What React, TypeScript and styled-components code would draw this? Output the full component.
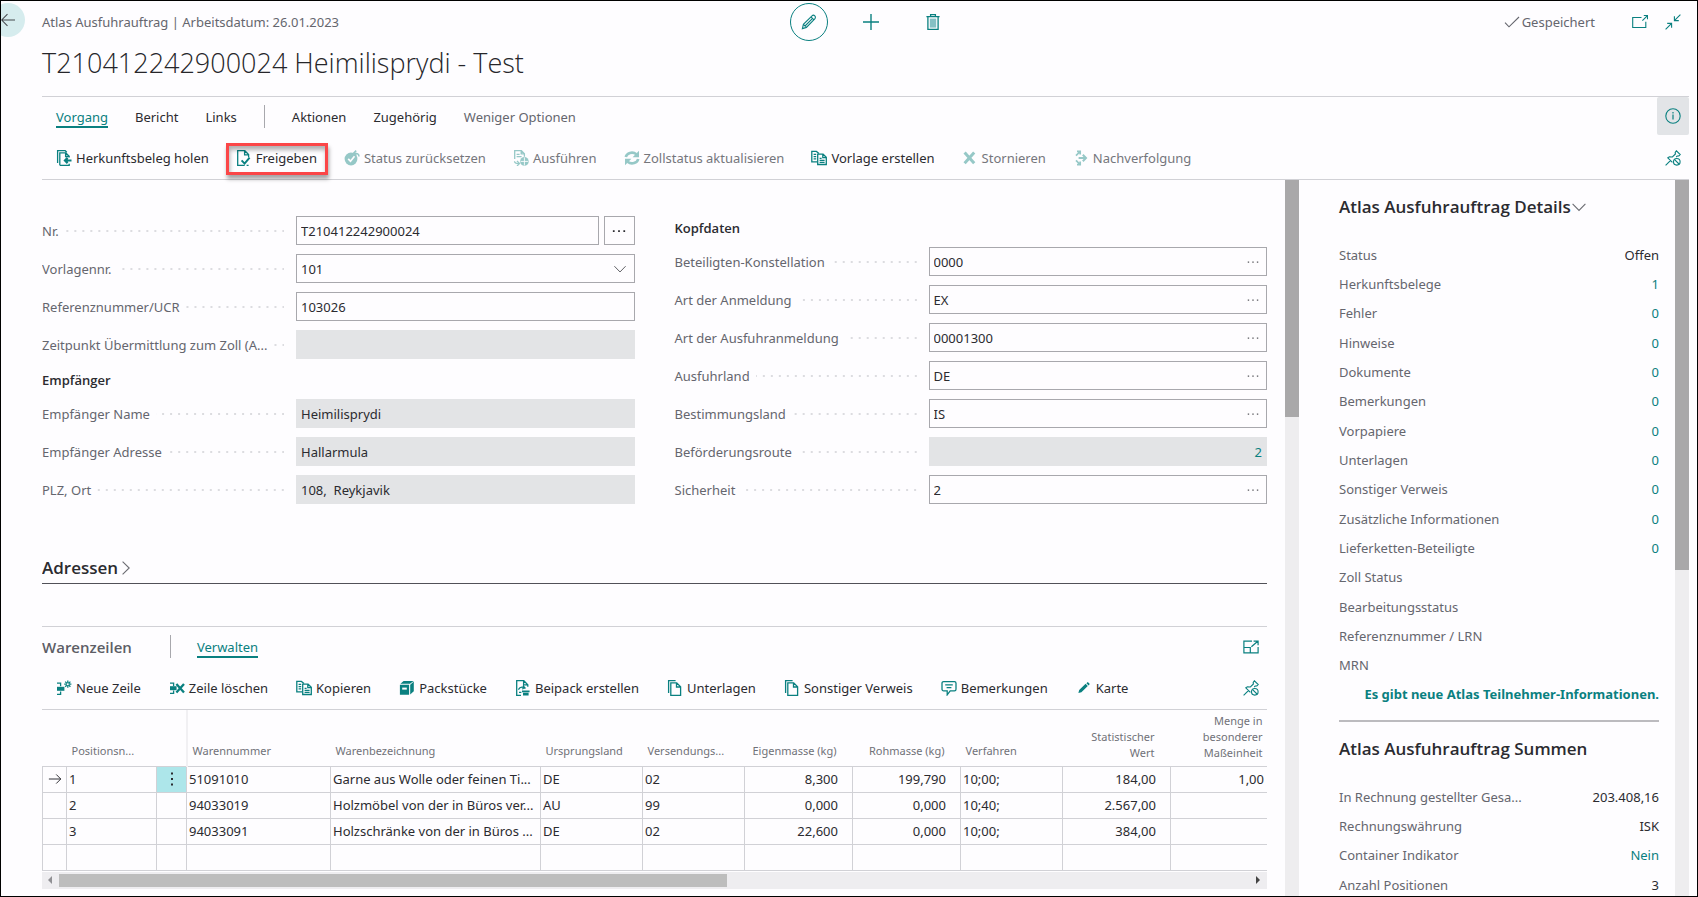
import React from 'react';
import styled, { createGlobalStyle, css } from 'styled-components';

const teal = '#0a8080';
const ink = '#2b2b30';
const muted = '#65666e';
const line = '#d1d1d6';
const edge = '#a8a8ad';

const GlobalStyle = createGlobalStyle`
  *, *::before, *::after { box-sizing: border-box; }
  body {
    margin: 0;
    background: #fefdff;
    color: ${ink};
    font: 400 13px/18px "Noto Sans", "Open Sans", sans-serif;
  }
  button, input, select { font: inherit; color: inherit; margin: 0; }
  a { color: inherit; text-decoration: none; }
  h1, h2, h3, dl, dd, ul { margin: 0; padding: 0; }
`;

/* ---------- icons ---------- */

const Svg = styled.svg`
  display: block;
  flex: none;
  fill: none;
  stroke: currentColor;
  stroke-width: 1.3;
`;

type IconName =
  | 'fetch' | 'release' | 'reset' | 'run' | 'refresh' | 'copy' | 'cancel' | 'track'
  | 'newLine' | 'deleteLine' | 'box' | 'pack' | 'pages' | 'comment' | 'card'
  | 'pencil' | 'plus' | 'trash' | 'popout' | 'collapse' | 'info' | 'unpin' | 'expand'
  | 'check' | 'back' | 'chevronDown' | 'chevronRight' | 'dots' | 'dotsBold' | 'arrowRight' | 'menu';

const shapes: Record<IconName, React.ReactNode> = {
  fetch: (
    <>
      <path d="M1.6 13V.7h7.6l1.6 1.6M3.8 15.3V2.9h6l3.4 3.4v1.2M3.8 15.3h9.4v-1.6M9.6 3v3.5h3.6" />
      <path d="M15.5 10.5H9M11.6 7.9 9 10.5l2.6 2.6" strokeWidth="2.2" />
    </>
  ),
  release: (
    <>
      <path d="M12.6 7.2V4.6L8.8.7H1.7v14.6h7M8.6.9v4h3.8M12.6 15.3h-2" />
      <path d="m5.6 10.4 3 3.2 5-6" strokeWidth="2" />
    </>
  ),
  reset: (
    <>
      <circle cx="7" cy="9" r="6.4" fill="currentColor" stroke="none" />
      <path d="m4.2 8.8 2.3 2.4 4-5" stroke="#fefdff" strokeWidth="1.7" />
      <path d="M15 6.4c0-2.4-1.8-3.4-5-3.2M12.2.6 9.6 3.2l2.8 2.4" strokeWidth="1.6" />
    </>
  ),
  run: (
    <>
      <path d="M1.7 9V.7h6.7l3 3v3M8.2.9v3h3M3.6 4.3h3M3.6 6.6h5M1.5 11.2c0 1.8 1 2.4 4.4 2.4M4 11l2.5 2.6L4 16" />
      <circle cx="11.4" cy="11.4" r="4.3" fill="currentColor" stroke="none" />
      <path d="M7.6 11.4h7.6M11.4 7.4v8" stroke="#fefdff" strokeWidth=".9" />
    </>
  ),
  refresh: (
    <>
      <path d="M1.8 7C2.6 3 8.4 1 12.4 4.2M14.2 9c-.8 4-6.600 6-10.600 2.800" strokeWidth="2.600" />
      <path d="M15 .8v6.400H8.600zM1 15.200V8.800h6.400z" fill="currentColor" stroke="none" />
    </>
  ),
  copy: (
    <>
      <path d="M6 11.8H.8V1.4h4.6l2.6 2M2.6 4.4h2.6M2.6 6.6h2.6M2.6 8.8h2.6" />
      <path d="M6.7 4.2h5.4l3.2 3.1v7.2H6.7zM11.8 4.4v3.2h3.2M8.6 8.4h2M8.6 10.4h5M8.6 12.4h5" />
    </>
  ),
  cancel: <path d="M2.6 2.6l9.600 10.600M12.2 2.6l-9.600 10.600" strokeWidth="3" />,
  track: (
    <>
      <path d="M3 5.6 6.6 2M4 1.4h3.2v3M3 10.4 6.6 14M4 14.6h3.2v-3" strokeWidth="1.7" />
      <path d="M5.6 8h7M9.8 4.8 13 8l-3.2 3.2" strokeWidth="2" />
    </>
  ),
  newLine: (
    <>
      <path d="M1 3.2h3.6v3M1 14.4h3.6v-3" />
      <path d="M1 6.8h7.4v4H1z" fill="currentColor" stroke="none" />
      <path d="M11.8.6v7.2M8.2 4.2h7.2M9.2 1.6l5.2 5.2M14.4 1.6 9.2 6.8" />
      <circle cx="11.8" cy="4.2" r="1.4" fill="#fefdff" strokeWidth=".8" />
    </>
  ),
  deleteLine: (
    <>
      <path d="M1 3.2h3.6v3M1 13.4h3.6v-3" />
      <path d="M1 6.2h6.6v4H1z" fill="currentColor" stroke="none" />
      <path d="m7.4 4 7.6 8.6M15 4 7.4 12.6" strokeWidth="2.3" />
    </>
  ),
  box: (
    <>
      <path d="M.9 4.8h9.2v10H.9zM1.4 3.8 4.6 1h10L11 3.8zM11.2 4.8l3.6-3.2v9.6l-3.6 3.4z" fill="currentColor" stroke="none" />
      <path d="M3.2 7.6h4.6v2H3.2z" fill="#fefdff" stroke="none" />
    </>
  ),
  pack: (
    <>
      <path d="M6 15.3H1.7V.7h7.1l4 4v2M8.6.9v4h4M3.4 9.6c1.2-2.4 3.6-3 6.2-1.8M8 5.6l2 2.4-3 1M4 12.4h2.4" />
      <path d="M7 10.4h7.6v1.8H7zM8 12.8h5.6v2.8H8z" fill="currentColor" stroke="none" />
    </>
  ),
  pages: <path d="M1.6 13V.7h7M3.8 2.9h5.9l3.9 3.9v8.5H3.8zM9.5 3.1v3.9h3.9" />,
  comment: <path d="M2.6 1.6h10.8c.9 0 1.6.7 1.6 1.6v6c0 .9-.7 1.6-1.6 1.6H9.2l-3 4v-4H2.6C1.7 10.8 1 10.1 1 9.2v-6c0-.9.7-1.6 1.6-1.6zM4.2 4.8h7.6M5.6 7.6h4.8" />,
  card: <path d="m2.4 13 .8-3 6.400-6.200 2.200 2.200-6.400 6.200zM10.400 3.200l1.400-1.200 2 2-1.200 1.400z" fill="currentColor" stroke="none" />,
  pencil: <path d="m1.4 14.6 1-4.2L11 1.8c.8-.8 2-.8 2.8 0s.8 2.2 0 3L5.4 13.4zM10 2.8l3 3M2.4 10.4l3 3M4 12l7.6-7.6" strokeWidth="1.1" />,
  plus: <path d="M8 0v16M0 8h16" strokeWidth="1.4" />,
  trash: (
    <>
      <path d="M1.4 2.7h13.2M5.6 2.5V.7h4.8v1.8M2.9 2.9v12.4h10.2V2.9" />
      <path d="M4.8 4.6h6.4v9H4.8z" fill="#85c0c4" stroke="none" />
    </>
  ),
  popout: <path d="M9.5 3.5H.7v10h13.1V7.8M10.4 6.6 15.2 1.8M11.8 1.5h3.7v3.7" strokeWidth="1.1" />,
  collapse: <path d="M.6 15.4 6.4 9.6M2.2 9.4h4.4v4.4M15.4.6 9.6 6.4M9.4 2.2v4.4h4.4" strokeWidth="1.1" />,
  info: (
    <>
      <circle cx="8" cy="8" r="7.2" strokeWidth="1.1" />
      <path d="M8 6.6v5M8 4v1.4" strokeWidth="1.2" />
    </>
  ),
  unpin: (
    <>
      <path d="M.6 15.4 5.4 10.6M7.4 12.4 2.8 7.8l1.6-1 3 .2 3-3-.2-1.6L11.4.8l3.8 3.8-1.4 1.4h-1.6l-1 1" strokeWidth="1.1" />
      <circle cx="11.8" cy="11.8" r="3.3" strokeWidth="1.1" />
      <path d="m9.6 9.6 4.4 4.4" strokeWidth="1.1" />
    </>
  ),
  expand: <path d="M9 2.1H.9v11.8h14.2V8M.9 8.5h6.4v5.4M8.4 7.8l6.4-5.6M10.6 2.1h4.5v4.2" strokeWidth="1.2" />,
  check: <path d="m1 8.6 4 4.2L15 3" strokeWidth="1.1" />,
  back: <path d="M16 8H1M7.4 1.4.8 8l6.6 6.6" strokeWidth="1.2" />,
  chevronDown: <path d="m1.6 4.8 6.4 6.6 6.4-6.6" strokeWidth="1.1" />,
  chevronRight: <path d="m4.6 1.6 6.6 6.4-6.6 6.4" strokeWidth="1.1" />,
  dots: <path d="M2 7.300h1.600v1.500H2zM7.200 7.300h1.600v1.500H7.200zM12.400 7.300H14v1.500h-1.600z" fill="currentColor" stroke="none" />,
  dotsBold: <path d="M1 7h2v2H1zM7 7h2v2H7zM13 7h2v2h-2z" fill="currentColor" stroke="none" />,
  arrowRight: <path d="M1 8h13.6M9.4 2.8 14.6 8l-5.2 5.2" strokeWidth="1.1" />,
  menu: <path d="M7 1.4h2v2H7zM7 7h2v2H7zM7 12.6h2v2H7z" fill="currentColor" stroke="none" />,
};

const Icon = ({ name, size = 16 }: { name: IconName; size?: number }) => (
  <Svg viewBox="0 0 16 16" width={size} height={size} aria-hidden="true">{shapes[name]}</Svg>
);

/* ---------- page frame ---------- */

const Page = styled.div`
  position: relative;
  display: flex;
  flex-direction: column;
  height: 100vh;
  padding: 0 8px 0 41px;
  border: 1px solid #000;
  overflow: hidden;
`;

const BareButton = styled.button`
  display: inline-flex;
  align-items: center;
  justify-content: center;
  padding: 0;
  border: 0;
  background: none;
`;

const BackButton = styled(BareButton)`
  position: absolute;
  top: 2px;
  left: -10px;
  width: 34px;
  height: 34px;
  background: #d6ecee;
  border-radius: 50%;
  color: #45484d;
`;

const TopBar = styled.header`
  display: grid;
  grid-template-columns: 1fr auto 1fr;
  align-items: center;
  height: 42px;
`;

const Crumb = styled.span`
  color: ${muted};
`;

const Tools = styled.div`
  display: flex;
  gap: 24px;
  padding-left: 10px;
  color: ${teal};
`;

const ToolButton = styled(BareButton)<{ $ring?: boolean }>`
  width: 38px;
  height: 38px;
  border-radius: 50%;
  ${p => p.$ring && css`border: 1px solid ${teal};`}
`;

const TopRight = styled.div`
  display: flex;
  justify-content: flex-end;
  align-items: center;
  gap: 17px;
  padding-right: 8px;
  color: ${teal};
`;

const Saved = styled.span`
  display: flex;
  align-items: center;
  gap: 2px;
  margin-right: 20px;
  color: ${muted};
`;

const Title = styled.h1`
  height: 53px;
  padding-top: 2px;
  font: 300 27px/36px "Open Sans", "Noto Sans", sans-serif;
  color: #26262a;
`;

const Ribbon = styled.nav`
  border-top: 1px solid ${line};
  border-bottom: 1px solid ${line};
`;

const TabRow = styled.div`
  display: flex;
  align-items: center;
  gap: 27px;
  height: 41px;
  padding: 0 0 2px 14px;
`;

const Tab = styled(BareButton)<{ $active?: boolean; $quiet?: boolean }>`
  padding-top: 2px;
  border-bottom: 2px solid ${p => (p.$active ? teal : 'transparent')};
  color: ${p => (p.$active ? teal : p.$quiet ? muted : ink)};
`;

const Divider = styled.span`
  width: 1px;
  height: 23px;
  background: ${edge};
`;

const InfoButton = styled(BareButton)`
  align-self: flex-start;
  width: 32px;
  height: 38px;
  margin-left: auto;
  border-radius: 2px;
  background: #e2e4e7;
  color: ${teal};
`;

const ActionRow = styled.div<{ $wide?: boolean }>`
  display: flex;
  align-items: center;
  gap: ${p => (p.$wide ? 28 : 27)}px;
  height: 41px;
  padding: 0 0 2px 14px;
`;

const Action = styled(BareButton)<{ $marked?: boolean }>`
  position: relative;
  gap: 4px;
  white-space: nowrap;
  svg { color: ${teal}; }
  &:disabled { color: #75767c; }
  &:disabled svg { color: #96c8c7; }
  ${p => p.$marked && css`
    &::after {
      content: '';
      position: absolute;
      inset: -6px -11px -8px -10px;
      border: 3px solid #fb4648;
      box-shadow: 1px 4px 4px rgba(0, 0, 0, 0.35), inset 1px 4px 4px rgba(0, 0, 0, 0.3);
    }
  `}
`;

const EndButton = styled(BareButton)`
  margin-left: auto;
  margin-right: 8px;
  color: ${teal};
`;

const Body = styled.div`
  display: flex;
  flex: 1;
  min-height: 0;
`;

const Main = styled.main`
  flex: 1;
  min-width: 0;
  margin-right: 18px;
  padding-top: 36px;
  overflow: hidden;
`;

const Track = styled.div`
  flex: none;
  width: 14px;
  background: #eeedef;
`;

const Thumb = styled.div<{ $height: number }>`
  height: ${p => p.$height}px;
  background: #a9a8a9;
`;

/* ---------- form ---------- */

const Form = styled.form`
  display: grid;
  grid-template-columns: 1fr 1fr;
  gap: 40px;
`;

const Column = styled.div`
  display: flex;
  flex-direction: column;
  gap: 9px;
`;

const GroupTitle = styled.h3`
  height: 22px;
  font: 600 13px/24px "Open Sans", "Noto Sans", sans-serif;
`;

const FieldRow = styled.div`
  display: flex;
  height: 29px;
`;

const FieldLabel = styled.label`
  display: flex;
  flex: none;
  align-items: center;
  gap: 6px;
  width: 254px;
  padding-right: 12px;
  color: ${muted};
  white-space: nowrap;
  &::after {
    content: '';
    flex: 1;
    height: 2px;
    background: linear-gradient(90deg, transparent 6px, #dcdce0 6px) right / 8px 2px repeat-x;
  }
`;

const FieldBox = styled.div<{ $filled?: boolean }>`
  display: flex;
  flex: 1;
  align-items: center;
  min-width: 0;
  border: 1px solid ${p => (p.$filled ? '#e3e4e6' : edge)};
  background: ${p => (p.$filled ? '#e3e4e6' : 'transparent')};
`;

const TextInput = styled.input<{ $link?: boolean }>`
  flex: 1;
  min-width: 0;
  height: 27px;
  padding: 0 4px;
  border: 0;
  background: none;
  text-align: ${p => (p.$link ? 'right' : 'left')};
  color: ${p => (p.$link ? teal : ink)};
`;

const SelectBox = styled(FieldBox)`
  position: relative;
  svg { position: absolute; right: 7px; color: #5a5b60; pointer-events: none; }
`;

const Select = styled.select`
  width: 100%;
  height: 27px;
  padding: 0 4px;
  border: 0;
  background: none;
  appearance: none;
`;

const LookupButton = styled(BareButton)`
  width: 26px;
  height: 27px;
  color: #55565b;
`;

const AssistButton = styled(BareButton)`
  width: 31px;
  margin-left: 5px;
  border: 1px solid ${edge};
`;

type FieldProps = {
  id: string;
  label: string;
  value: string;
  kind?: 'text' | 'lookup' | 'assist' | 'select' | 'filled' | 'link';
};

const Field = ({ id, label, value, kind = 'text' }: FieldProps) => (
  <FieldRow>
    <FieldLabel htmlFor={id}>{label}</FieldLabel>
    {kind === 'select' ? (
      <SelectBox>
        <Select id={id} defaultValue={value}><option>{value}</option></Select>
        <Icon name="chevronDown" size={14} />
      </SelectBox>
    ) : (
      <FieldBox $filled={kind === 'filled' || kind === 'link'}>
        <TextInput id={id} defaultValue={value} readOnly={kind === 'filled' || kind === 'link'} $link={kind === 'link'} />
        {kind === 'lookup' && <LookupButton type="button" aria-label={`${label} auswählen`}><Icon name="dots" size={14} /></LookupButton>}
      </FieldBox>
    )}
    {kind === 'assist' && <AssistButton type="button" aria-label={`${label} bearbeiten`}><Icon name="dotsBold" size={14} /></AssistButton>}
  </FieldRow>
);

const leftTop: FieldProps[] = [
  { id: 'nr', label: 'Nr.', value: 'T210412242900024', kind: 'assist' },
  { id: 'vorlage', label: 'Vorlagennr.', value: '101', kind: 'select' },
  { id: 'ucr', label: 'Referenznummer/UCR', value: '103026' },
  { id: 'zeit', label: 'Zeitpunkt Übermittlung zum Zoll (A...', value: '', kind: 'filled' },
];
const leftBottom: FieldProps[] = [
  { id: 'ename', label: 'Empfänger Name', value: 'Heimilisprydi', kind: 'filled' },
  { id: 'eadr', label: 'Empfänger Adresse', value: 'Hallarmula', kind: 'filled' },
  { id: 'ort', label: 'PLZ, Ort', value: '108,  Reykjavik', kind: 'filled' },
];
const rightFields: FieldProps[] = [
  { id: 'konst', label: 'Beteiligten-Konstellation', value: '0000', kind: 'lookup' },
  { id: 'anm', label: 'Art der Anmeldung', value: 'EX', kind: 'lookup' },
  { id: 'aanm', label: 'Art der Ausfuhranmeldung', value: '00001300', kind: 'lookup' },
  { id: 'aland', label: 'Ausfuhrland', value: 'DE', kind: 'lookup' },
  { id: 'bland', label: 'Bestimmungsland', value: 'IS', kind: 'lookup' },
  { id: 'route', label: 'Beförderungsroute', value: '2', kind: 'link' },
  { id: 'sich', label: 'Sicherheit', value: '2', kind: 'lookup' },
];

/* ---------- sections and lines ---------- */

const SectionHead = styled.div`
  margin-top: 51px;
  padding-bottom: 2px;
  border-bottom: 1px solid #515158;
`;

const SectionButton = styled(BareButton)`
  font: 600 17px/26px "Open Sans", "Noto Sans", sans-serif;
  svg { color: #6b6c72; }
`;

const Lines = styled.section`
  margin-top: 42px;
  border-top: 1px solid ${line};
`;

const LinesHead = styled.div`
  display: flex;
  align-items: center;
  gap: 26px;
  height: 41px;
  padding-bottom: 2px;
`;

const LinesTitle = styled.h2`
  margin-right: 12px;
  font: 600 15px/22px "Open Sans", "Noto Sans", sans-serif;
  color: #5d5e66;
`;

const TableWrap = styled.div`
  border-top: 1px solid ${line};
  overflow: hidden;
`;

const Table = styled.table`
  width: 1236px;
  table-layout: fixed;
  border-collapse: collapse;
`;

const HeadCell = styled.th<{ $right?: boolean; $wrap?: boolean; $frozen?: boolean }>`
  height: 56px;
  padding: ${p => (p.$wrap ? '0 16px 5px 5px' : '0 16px 7px 5px')};
  vertical-align: bottom;
  text-align: ${p => (p.$right ? 'right' : 'left')};
  font-weight: 400;
  font-size: 11px;
  line-height: 16px;
  color: #707178;
  white-space: ${p => (p.$wrap ? 'normal' : 'nowrap')};
  ${p => p.$frozen && css`border-right: 2px solid #f1f0f3;`}
`;

const Cell = styled.td<{ $right?: boolean; $active?: boolean }>`
  height: 26px;
  padding: ${p => (p.$right ? '0 14px 0 2px' : '0 2px')};
  border: 1px solid ${line};
  text-align: ${p => (p.$right ? 'right' : 'left')};
  white-space: nowrap;
  background: ${p => (p.$active ? '#ade6ea' : 'transparent')};
  svg { margin: 0 auto; }
`;

const RowMenu = styled(BareButton)`
  display: flex;
  width: 100%;
`;

const columns: { label: string; width: number; right?: boolean; wrap?: boolean }[] = [
  { label: '', width: 24 },
  { label: 'Positionsn...', width: 90 },
  { label: '', width: 30 },
  { label: 'Warennummer', width: 144 },
  { label: 'Warenbezeichnung', width: 210 },
  { label: 'Ursprungsland', width: 102 },
  { label: 'Versendungs...', width: 102 },
  { label: 'Eigenmasse (kg)', width: 108, right: true },
  { label: 'Rohmasse (kg)', width: 108, right: true },
  { label: 'Verfahren', width: 102 },
  { label: 'Statistischer Wert', width: 108, right: true, wrap: true },
  { label: 'Menge in besonderer Maßeinheit', width: 108, right: true, wrap: true },
];

const rows = [
  ['1', '', '51091010', 'Garne aus Wolle oder feinen Ti...', 'DE', '02', '8,300', '199,790', '10;00;', '184,00', '1,00'],
  ['2', '', '94033019', 'Holzmöbel von der in Büros ver...', 'AU', '99', '0,000', '0,000', '10;40;', '2.567,00', ''],
  ['3', '', '94033091', 'Holzschränke von der in Büros ...', 'DE', '02', '22,600', '0,000', '10;00;', '384,00', ''],
  ['', '', '', '', '', '', '', '', '', '', ''],
];

const HScroll = styled.div`
  display: flex;
  align-items: center;
  height: 17px;
  margin-top: 1px;
  background: #eeedf0;
`;

const HThumb = styled.div`
  width: 54.5%;
  height: 13px;
  background: #bdbdbd;
`;

const ScrollArrow = styled.span<{ $end?: boolean }>`
  width: 17px;
  margin-left: ${p => (p.$end ? 'auto' : '0')};
  &::before {
    content: '';
    display: block;
    width: 4px;
    margin: 0 6px;
    border: 4px solid transparent;
    ${p => (p.$end
    ? css`border-left-color: #444; border-right-width: 0;`
    : css`border-right-color: #909094; border-left-width: 0;`)}
  }
`;

/* ---------- fact boxes ---------- */

const Aside = styled.aside`
  width: 376px;
  padding: 14px 16px 0 40px;
  overflow: hidden;
`;

const FactTitle = styled.h2`
  display: flex;
  align-items: center;
  font: 600 17px/26px "Open Sans", "Noto Sans", sans-serif;
  svg { color: #6b6c72; }
`;

const Facts = styled.dl`
  margin-top: 20px;
`;

const Fact = styled.div`
  display: flex;
  align-items: center;
  justify-content: space-between;
  height: 29px;
  &:nth-child(3n) { height: 30px; }
  dt { color: ${muted}; white-space: nowrap; }
`;

const TealLink = styled.a`
  color: ${teal};
`;

const Notice = styled.p`
  margin: 0;
  font-weight: 700;
  line-height: 29px;
  text-align: right;
  white-space: nowrap;
`;

const Rule = styled.hr`
  height: 2px;
  margin: 11px 0 14px;
  border: 0;
  background: #bcbbbf;
`;

const zero = ['Fehler', 'Hinweise', 'Dokumente', 'Bemerkungen', 'Vorpapiere', 'Unterlagen', 'Sonstiger Verweis', 'Zusätzliche Informationen', 'Lieferketten-Beteiligte'];
const details: [string, string, boolean][] = [
  ['Status', 'Offen', false],
  ['Herkunftsbelege', '1', true],
  ...zero.map((z): [string, string, boolean] => [z, '0', true]),
  ['Zoll Status', '', false],
  ['Bearbeitungsstatus', '', false],
  ['Referenznummer / LRN', '', false],
  ['MRN', '', false],
];
const totals: [string, string, boolean][] = [
  ['In Rechnung gestellter Gesa...', '203.408,16', false],
  ['Rechnungswährung', 'ISK', false],
  ['Container Indikator', 'Nein', true],
  ['Anzahl Positionen', '3', false],
];

const FactRows = ({ items }: { items: [string, string, boolean][] }) => (
  <>
    {items.map(([k, v, link]) => (
      <Fact key={k}>
        <dt>{k}</dt>
        <dd>{link ? <TealLink href="#">{v}</TealLink> : v}</dd>
      </Fact>
    ))}
  </>
);

const pageActions: { icon: IconName; label: string; off?: boolean; marked?: boolean }[] = [
  { icon: 'fetch', label: 'Herkunftsbeleg holen' },
  { icon: 'release', label: 'Freigeben', marked: true },
  { icon: 'reset', label: 'Status zurücksetzen', off: true },
  { icon: 'run', label: 'Ausführen', off: true },
  { icon: 'refresh', label: 'Zollstatus aktualisieren', off: true },
  { icon: 'copy', label: 'Vorlage erstellen' },
  { icon: 'cancel', label: 'Stornieren', off: true },
  { icon: 'track', label: 'Nachverfolgung', off: true },
];

const lineActions: { icon: IconName; label: string }[] = [
  { icon: 'newLine', label: 'Neue Zeile' },
  { icon: 'deleteLine', label: 'Zeile löschen' },
  { icon: 'copy', label: 'Kopieren' },
  { icon: 'box', label: 'Packstücke' },
  { icon: 'pack', label: 'Beipack erstellen' },
  { icon: 'pages', label: 'Unterlagen' },
  { icon: 'pages', label: 'Sonstiger Verweis' },
  { icon: 'comment', label: 'Bemerkungen' },
  { icon: 'card', label: 'Karte' },
];

export default function App() {
  return (
    <Page>
      <GlobalStyle />
      <BackButton aria-label="Zurück"><Icon name="back" size={14} /></BackButton>
      <TopBar>
        <Crumb>Atlas Ausfuhrauftrag | Arbeitsdatum: 26.01.2023</Crumb>
        <Tools>
          <ToolButton $ring aria-label="Bearbeiten"><Icon name="pencil" /></ToolButton>
          <ToolButton aria-label="Neu"><Icon name="plus" /></ToolButton>
          <ToolButton aria-label="Löschen"><Icon name="trash" /></ToolButton>
        </Tools>
        <TopRight>
          <Saved><Icon name="check" />Gespeichert</Saved>
          <BareButton aria-label="In neuem Fenster öffnen"><Icon name="popout" /></BareButton>
          <BareButton aria-label="Verkleinern"><Icon name="collapse" /></BareButton>
        </TopRight>
      </TopBar>
      <Title>T210412242900024 Heimilisprydi - Test</Title>

      <Ribbon>
        <TabRow>
          <Tab $active>Vorgang</Tab>
          <Tab>Bericht</Tab>
          <Tab>Links</Tab>
          <Divider />
          <Tab>Aktionen</Tab>
          <Tab>Zugehörig</Tab>
          <Tab $quiet>Weniger Optionen</Tab>
          <InfoButton aria-label="Infobox ein- oder ausblenden"><Icon name="info" /></InfoButton>
        </TabRow>
        <ActionRow>
          {pageActions.map(a => (
            <Action key={a.label} disabled={a.off} $marked={a.marked}><Icon name={a.icon} />{a.label}</Action>
          ))}
          <EndButton aria-label="Anheften aufheben"><Icon name="unpin" /></EndButton>
        </ActionRow>
      </Ribbon>

      <Body>
        <Main>
          <Form>
            <Column>
              {leftTop.map(f => <Field key={f.id} {...f} />)}
              <GroupTitle>Empfänger</GroupTitle>
              {leftBottom.map(f => <Field key={f.id} {...f} />)}
            </Column>
            <Column>
              <GroupTitle>Kopfdaten</GroupTitle>
              {rightFields.map(f => <Field key={f.id} {...f} />)}
            </Column>
          </Form>

          <SectionHead>
            <SectionButton>Adressen<Icon name="chevronRight" /></SectionButton>
          </SectionHead>

          <Lines>
            <LinesHead>
              <LinesTitle>Warenzeilen</LinesTitle>
              <Divider />
              <Tab $active>Verwalten</Tab>
              <EndButton aria-label="Fokusmodus"><Icon name="expand" /></EndButton>
            </LinesHead>
            <ActionRow $wide>
              {lineActions.map(a => <Action key={a.label}><Icon name={a.icon} />{a.label}</Action>)}
              <EndButton aria-label="Anheften aufheben"><Icon name="unpin" /></EndButton>
            </ActionRow>
            <TableWrap>
              <Table>
                <colgroup>{columns.map((c, i) => <col key={i} width={c.width} />)}</colgroup>
                <thead>
                  <tr>
                    {columns.map((c, i) => (
                      <HeadCell key={i} $right={c.right} $wrap={c.wrap} $frozen={i === 2}>{c.label}</HeadCell>
                    ))}
                  </tr>
                </thead>
                <tbody>
                  {rows.map((r, ri) => (
                    <tr key={ri}>
                      <Cell>{ri === 0 && <Icon name="arrowRight" size={14} />}</Cell>
                      {r.map((v, ci) => {
                        const active = ri === 0 && ci === 1;
                        return (
                          <Cell key={ci} $right={columns[ci + 1].right} $active={active}>
                            {active ? <RowMenu aria-label="Weitere Optionen"><Icon name="menu" /></RowMenu> : v}
                          </Cell>
                        );
                      })}
                    </tr>
                  ))}
                </tbody>
              </Table>
            </TableWrap>
            <HScroll>
              <ScrollArrow />
              <HThumb />
              <ScrollArrow $end />
            </HScroll>
          </Lines>
        </Main>
        <Track><Thumb $height={237} /></Track>

        <Aside>
          <FactTitle>Atlas Ausfuhrauftrag Details<Icon name="chevronDown" /></FactTitle>
          <Facts><FactRows items={details} /></Facts>
          <Notice><TealLink href="#">Es gibt neue Atlas Teilnehmer-Informationen.</TealLink></Notice>
          <Rule />
          <FactTitle>Atlas Ausfuhrauftrag Summen</FactTitle>
          <Facts><FactRows items={totals} /></Facts>
        </Aside>
        <Track><Thumb $height={390} /></Track>
      </Body>
    </Page>
  );
}
